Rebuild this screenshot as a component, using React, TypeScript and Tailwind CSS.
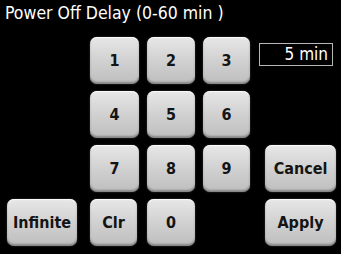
import React, { useState } from 'react';

const font = "font-['Liberation_Sans_Narrow','DejaVu_Sans_Condensed','Liberation_Sans',sans-serif]";

function Key({ label, className = '', onClick }: { label: string; className?: string; onClick?: () => void }) {
  return (
    <button
      onClick={onClick}
      className={`h-full rounded-[7px] bg-linear-to-b from-[#e6e7e6] via-[#d0d1d0] to-[#bdbebd] text-[16px] font-bold leading-none text-[#141414] shadow-[inset_0_-2px_2px_rgba(0,0,0,0.3),inset_0_1px_1px_rgba(255,255,255,0.9),0_0_2px_rgba(255,255,255,0.25)] ${className}`}
    >
      {label}
    </button>
  );
}

export default function App() {
  const [value, setValue] = useState('5');

  const press = (d: string) => setValue((v) => (v === '0' ? d : (v + d).slice(0, 2)));

  return (
    <div className={`min-h-[259px] w-[346px] bg-white ${font}`}>
      <div className="h-[254px] w-[341px] bg-black">
        {/* Title */}
        <div className="h-[37px] pl-[5px] pt-[3px] text-[17.5px] leading-[20px] text-white">
          Power Off Delay (0-60 min )
        </div>

        {/* Keypad */}
        <div className="grid grid-cols-[83px_57px_56px_56px_77px] grid-rows-[47px_47px_47px_47px] gap-y-[7px] pl-[7px]">
          <div />
          <Key label="1" className="w-[49px]" onClick={() => press('1')} />
          <Key label="2" className="w-[48px]" onClick={() => press('2')} />
          <Key label="3" className="w-[47px]" onClick={() => press('3')} />
          <div className="mt-[6px] flex h-[23px] w-[74px] items-center justify-end border border-[#b8b8b8] pr-[4px] text-[17px] leading-none text-white">
            {value} min
          </div>

          <div />
          <Key label="4" className="w-[49px]" onClick={() => press('4')} />
          <Key label="5" className="w-[48px]" onClick={() => press('5')} />
          <Key label="6" className="w-[47px]" onClick={() => press('6')} />
          <div />

          <div />
          <Key label="7" className="w-[49px]" onClick={() => press('7')} />
          <Key label="8" className="w-[48px]" onClick={() => press('8')} />
          <Key label="9" className="w-[47px]" onClick={() => press('9')} />
          <Key label="Cancel" className="ml-[6px] w-[71px]" />

          <Key label="Infinite" className="w-[70px]" />
          <Key label="Clr" className="w-[47px]" onClick={() => setValue('0')} />
          <Key label="0" className="w-[48px]" onClick={() => press('0')} />
          <div />
          <Key label="Apply" className="ml-[6px] w-[71px]" />
        </div>
      </div>
    </div>
  );
}
